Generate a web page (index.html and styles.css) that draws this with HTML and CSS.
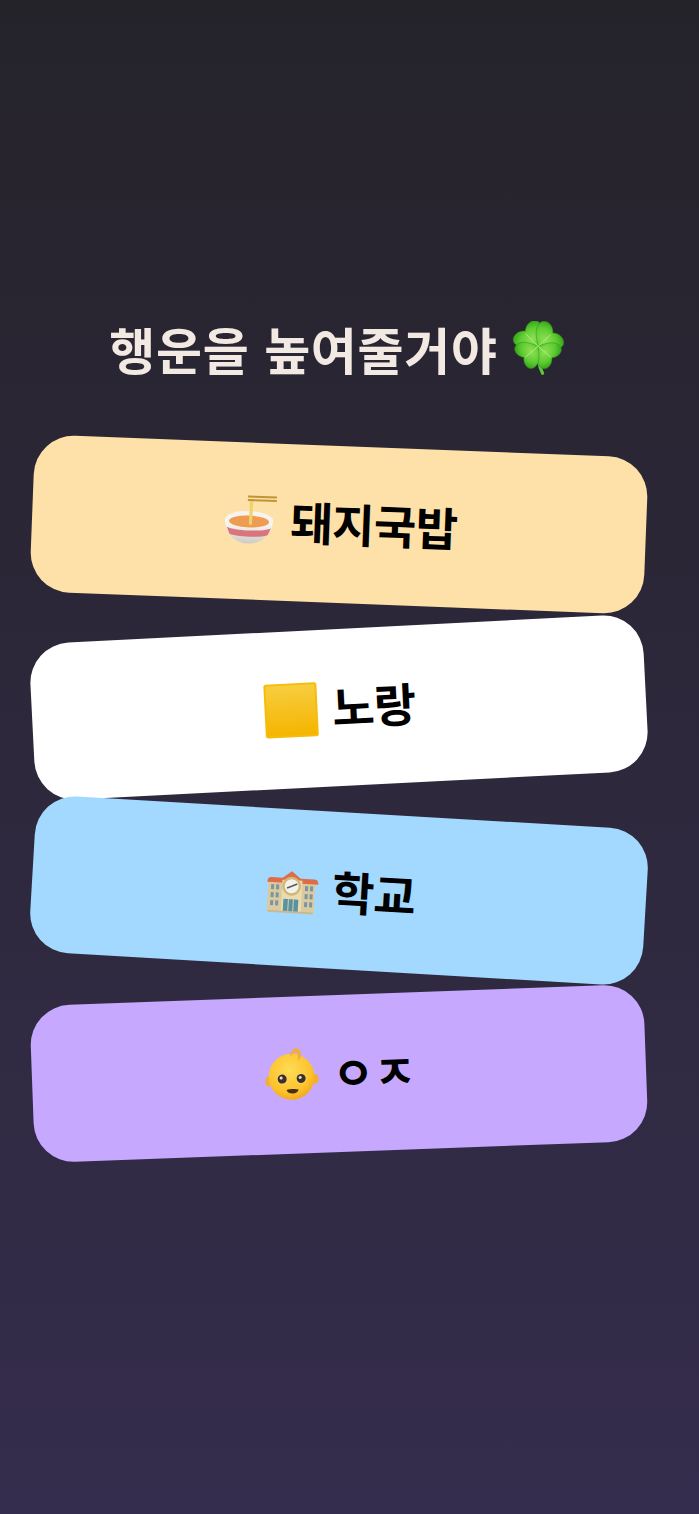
FILE: index.html
```html
<!DOCTYPE html>
<html lang="ko">

<head>
    <meta charset="UTF-8">
    <meta name="viewport" content="width=device-width, initial-scale=1.0">
    <title>행운을 높여줄거야</title>
    <link rel="stylesheet" href="styles.css">
</head>

<body>
    <h1 class="title">
        <span>행운을 높여줄거야</span>
        <svg class="clover" viewBox="-2 -2 60 62">
            <defs>
                <radialGradient id="leaf" cx="50%" cy="60%" r="70%">
                    <stop offset="0" stop-color="#8fe055" />
                    <stop offset="0.6" stop-color="#5ccb30" />
                    <stop offset="1" stop-color="#35a11c" />
                </radialGradient>
            </defs>
            <path d="M27 26C26 36 27 46 32 56" fill="none" stroke="#5fc639" stroke-width="3.500" stroke-linecap="round" />
            <g fill="url(#leaf)" stroke="#2f8c18" stroke-width="0.500" transform="translate(27 26)">
                <path transform="rotate(-40)" d="M0 0C-6 -4 -18 -9 -18 -19C-18 -27 -6 -29 0 -22C6 -29 18 -27 18 -19C18 -9 6 -4 0 0Z" />
                <path transform="rotate(48)" d="M0 0C-6 -4 -18 -9 -18 -19C-18 -27 -6 -29 0 -22C6 -29 18 -27 18 -19C18 -9 6 -4 0 0Z" />
                <path transform="rotate(130)" d="M0 0C-6 -4 -16 -8 -16 -17C-16 -25 -6 -26 0 -20C6 -26 16 -25 16 -17C16 -8 6 -4 0 0Z" />
                <path transform="rotate(232)" d="M0 0C-6 -4 -16 -8 -16 -17C-16 -25 -6 -26 0 -20C6 -26 16 -25 16 -17C16 -8 6 -4 0 0Z" />
            </g>
            <path d="M27 26L13 12M27 26L41 13M27 26L41 38M27 26L13 38" stroke="#b6ec88" stroke-width="1" fill="none" />
        </svg>
    </h1>

    <div class="cards">
        <div class="card card-ramen">
            <svg class="emoji" viewBox="-2 0 54 54">
                <defs>
                    <linearGradient id="bowl" x1="0" y1="0" x2="0" y2="1">
                        <stop offset="0" stop-color="#ffffff" />
                        <stop offset="1" stop-color="#cfcac4" />
                    </linearGradient>
                </defs>
                <path d="M1 25C1 38 10 49 25 49C39 49 49 38 49 25Z" fill="url(#bowl)" />
                <ellipse cx="25" cy="25" rx="24" ry="8.500" fill="#f7f3ee" />
                <ellipse cx="25" cy="27" rx="20" ry="6" fill="#ee9c52" />
                <path d="M3 33C12 37 38 37 47 33L44 40C36 43 14 43 6 40Z" fill="#d9757b" />
                <path d="M25 5H28.500L28 30H25Z" fill="#efd26a" />
                <path d="M23 1H52V3H23ZM23 4.500H52V6.500H23Z" fill="#bf9636" />
            </svg>
            <span>돼지국밥</span>
        </div>
        <div class="card card-yellow">
            <svg class="emoji" viewBox="0 0 54 54">
                <defs>
                    <linearGradient id="gold" x1="0" y1="0" x2="0" y2="1">
                        <stop offset="0" stop-color="#f7cd3f" />
                        <stop offset="1" stop-color="#f5b500" />
                    </linearGradient>
                </defs>
                <rect width="53" height="54" x="0.500" rx="2.500" fill="#f5bd08" />
                <rect width="49" height="50" x="2.500" y="2" rx="1.500" fill="url(#gold)" />
            </svg>
            <span>노랑</span>
        </div>
        <div class="card card-blue">
            <svg class="emoji" viewBox="0 -4 54 54">
                <path d="M4 15H51V47H4Z" fill="#dacb9f" />
                <path d="M3 18C3 15 4 13 7 13H18L27 6L36 13H50C53 13 54 15 54 18Z" fill="#e06c47" />
                <path d="M18 15H38V47H18Z" fill="#e9dcb2" />
                <circle cx="27.500" cy="21" r="9.500" fill="#cfb878" />
                <circle cx="27.500" cy="21" r="7" fill="#f3f1ea" />
                <path d="M27.500 21L33 18.500M27.500 21L23 23" stroke="#555a60" stroke-width="1.500" />
                <g fill="#7d93a6">
                    <rect x="7" y="20" width="3" height="5" />
                    <rect x="12" y="20" width="3" height="5" />
                    <rect x="7" y="28" width="3" height="5" />
                    <rect x="12" y="28" width="3" height="5" />
                    <rect x="7" y="36" width="3" height="5" />
                    <rect x="12" y="36" width="3" height="5" />
                    <rect x="41" y="20" width="3" height="5" />
                    <rect x="46" y="20" width="3" height="5" />
                    <rect x="41" y="28" width="3" height="5" />
                    <rect x="46" y="28" width="3" height="5" />
                    <rect x="41" y="36" width="3" height="5" />
                    <rect x="46" y="36" width="3" height="5" />
                </g>
                <path d="M20 34H35V47H20Z" fill="#5a92a0" />
                <path d="M25 34V47M30 34V47" stroke="#d8d0ad" stroke-width="1" />
                <path d="M5 46H50V48H5Z" fill="#c7ba92" />
            </svg>
            <span>학교</span>
        </div>
        <div class="card card-purple">
            <svg class="emoji" viewBox="0 3 54 54">
                <defs>
                    <radialGradient id="face" cx="45%" cy="35%" r="70%">
                        <stop offset="0" stop-color="#ffdc55" />
                        <stop offset="0.7" stop-color="#fcc22c" />
                        <stop offset="1" stop-color="#f2a11a" />
                    </radialGradient>
                </defs>
                <ellipse cx="4.500" cy="35" rx="3.500" ry="5" fill="#f2ae35" />
                <ellipse cx="51" cy="34" rx="3.500" ry="5" fill="#f2ae35" />
                <circle cx="27.500" cy="31" r="23" fill="url(#face)" />
                <path d="M27 9C28 4 33 1 36 4C39 8 38 13 34 15C36 10 34 6 31 7C29 8 28 9 28 11Z" fill="#f2ae35" />
                <circle cx="18" cy="33" r="5.500" fill="#f9d06a" />
                <circle cx="37" cy="33" r="5.500" fill="#f9d06a" />
                <circle cx="18" cy="33" r="4.500" fill="#3b3023" />
                <circle cx="37" cy="33" r="4.500" fill="#3b3023" />
                <circle cx="17" cy="32" r="1.500" fill="#e8e4da" />
                <circle cx="36" cy="32" r="1.500" fill="#e8e4da" />
                <path d="M22 44C25 43 31 43 34 44C33 49 23 49 22 44Z" fill="#4a2f17" />
            </svg>
            <span>ㅇㅈ</span>
        </div>
    </div>
</body>

</html>
```

FILE: styles.css
```css
* {
    box-sizing: border-box;
}

html,
body {
    height: 100%;
}

body {
    margin: 0;
    padding: 316px 53px 0 32px;
    background: linear-gradient(180deg, #25232a 0%, #352d4d 100%);
    font-family: "Noto Sans CJK KR", "Noto Sans", sans-serif;
}

.title {
    display: flex;
    align-items: center;
    justify-content: center;
    gap: 14px;
    margin: 0 0 64px;
    padding-right: 3px;
    height: 66px;
    color: #f2eae2;
    font-size: 50px;
    font-weight: 700;
    letter-spacing: 0.7px;
    white-space: nowrap;
}

.title span {
    padding-bottom: 2px;
}

.clover {
    width: 54px;
    height: 56px;
    flex: none;
}

.cards {
    display: flex;
    flex-direction: column;
    gap: 26px;
}

.card {
    display: flex;
    align-items: center;
    justify-content: center;
    gap: 14px;
    height: 157px;
    padding-left: 2px;
    border-radius: 40px;
    color: #000;
    font-size: 46px;
    font-weight: 700;
    letter-spacing: -0.5px;
}

.card span {
    padding-bottom: 6px;
}

.emoji {
    width: 54px;
    height: 54px;
    flex: none;
    overflow: visible;
}

.card-ramen {
    background: #fee0a9;
    transform: rotate(2.2deg);
}

.card-yellow {
    background: #fff;
    transform: rotate(-2.9deg);
}

.card-blue {
    background: #a3d8ff;
    transform: rotate(3.35deg);
}

.card-blue span {
    padding-bottom: 2px;
}

.card-purple {
    background: #c6a9fe;
    transform: rotate(-2.1deg);
}
```
